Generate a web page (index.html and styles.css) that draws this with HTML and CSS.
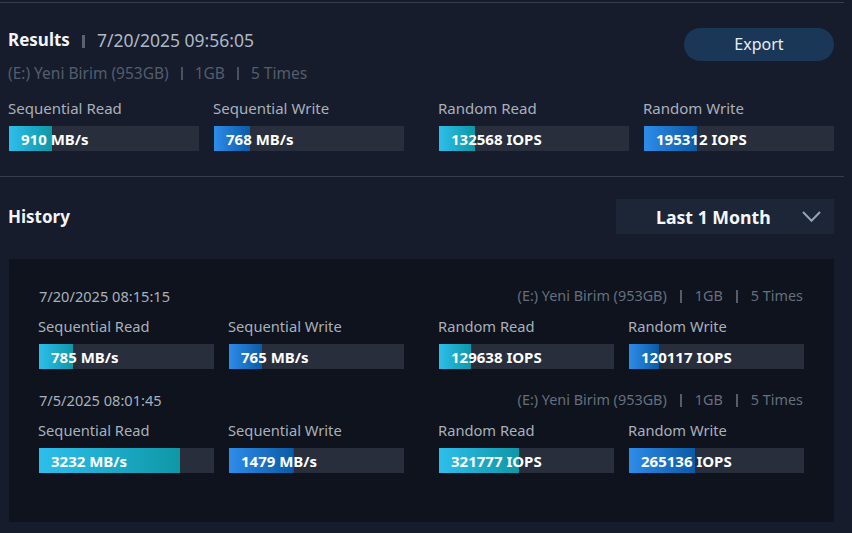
FILE: index.html
```html
<!DOCTYPE html>
<html lang="en">
<head>
<meta charset="utf-8">
<title>Results</title>
<link rel="stylesheet" href="styles.css">
</head>
<body>
<div class="page">
  <div class="rule rule-top"></div>

  <section class="results">
    <div class="results-head">
      <div class="results-info">
        <div class="title-line">
          <span class="title">Results</span>
          <span class="vsep vsep-title"></span>
          <span class="stamp">7/20/2025 09:56:05</span>
        </div>
        <div class="meta meta-results">
          <span>(E:) Yeni Birim (953GB)</span><span class="vsep"></span><span>1GB</span><span class="vsep"></span><span>5 Times</span>
        </div>
      </div>
      <button class="export">Export</button>
    </div>

    <div class="metrics">
      <div class="pair">
        <div class="metric">
          <div class="label">Sequential Read</div>
          <div class="bar bar-cyan" style="--w:22.75%">910 MB/s</div>
        </div>
        <div class="metric">
          <div class="label">Sequential Write</div>
          <div class="bar bar-blue" style="--w:19.2%">768 MB/s</div>
        </div>
      </div>
      <div class="pair">
        <div class="metric">
          <div class="label">Random Read</div>
          <div class="bar bar-cyan" style="--w:18.94%">132568 IOPS</div>
        </div>
        <div class="metric">
          <div class="label">Random Write</div>
          <div class="bar bar-blue" style="--w:27.9%">195312 IOPS</div>
        </div>
      </div>
    </div>
  </section>

  <div class="rule rule-mid"></div>

  <section class="history">
    <div class="history-head">
      <span class="title">History</span>
      <div class="dropdown">
        <span class="dropdown-text">Last 1 Month</span>
        <svg class="chevron" width="19" height="11" viewBox="0 0 19 11"><polyline points="1,1 9.5,9.8 18,1" fill="none" stroke="#93a3ba" stroke-width="2"/></svg>
      </div>
    </div>

    <div class="panel">
      <div class="entry">
        <div class="entry-head">
          <span class="entry-date">7/20/2025 08:15:15</span>
          <div class="meta meta-history">
            <span>(E:) Yeni Birim (953GB)</span><span class="vsep"></span><span>1GB</span><span class="vsep"></span><span>5 Times</span>
          </div>
        </div>
        <div class="metrics">
          <div class="pair">
            <div class="metric">
              <div class="label">Sequential Read</div>
              <div class="bar bar-cyan" style="--w:19.63%">785 MB/s</div>
            </div>
            <div class="metric">
              <div class="label">Sequential Write</div>
              <div class="bar bar-blue" style="--w:19.13%">765 MB/s</div>
            </div>
          </div>
          <div class="pair">
            <div class="metric">
              <div class="label">Random Read</div>
              <div class="bar bar-cyan" style="--w:18.52%">129638 IOPS</div>
            </div>
            <div class="metric">
              <div class="label">Random Write</div>
              <div class="bar bar-blue" style="--w:17.16%">120117 IOPS</div>
            </div>
          </div>
        </div>
      </div>

      <div class="entry">
        <div class="entry-head">
          <span class="entry-date">7/5/2025 08:01:45</span>
          <div class="meta meta-history">
            <span>(E:) Yeni Birim (953GB)</span><span class="vsep"></span><span>1GB</span><span class="vsep"></span><span>5 Times</span>
          </div>
        </div>
        <div class="metrics">
          <div class="pair">
            <div class="metric">
              <div class="label">Sequential Read</div>
              <div class="bar bar-cyan" style="--w:80.8%">3232 MB/s</div>
            </div>
            <div class="metric">
              <div class="label">Sequential Write</div>
              <div class="bar bar-blue" style="--w:36.98%">1479 MB/s</div>
            </div>
          </div>
          <div class="pair">
            <div class="metric">
              <div class="label">Random Read</div>
              <div class="bar bar-cyan" style="--w:45.97%">321777 IOPS</div>
            </div>
            <div class="metric">
              <div class="label">Random Write</div>
              <div class="bar bar-blue" style="--w:37.88%">265136 IOPS</div>
            </div>
          </div>
        </div>
      </div>
    </div>
  </section>
</div>
</body>
</html>
```

FILE: styles.css
```css
* { box-sizing: border-box; }

html, body {
  margin: 0;
  padding: 0;
  background: #161c2b;
}

body {
  font-family: "Noto Sans", "Open Sans", sans-serif;
  color: #a9b0bb;
  width: 852px;
  height: 533px;
  overflow: hidden;
}

.page {
  width: 844px;
}

.rule {
  height: 1px;
  background: #363d4b;
}

.rule-top { margin-top: 2px; }

/* ---------- Results ---------- */
.results {
  padding: 25px 10px 0 9px;
}

.results-head {
  display: flex;
  justify-content: space-between;
  align-items: flex-start;
}

.title-line {
  display: flex;
  align-items: center;
  height: 24px;
  line-height: 24px;
}

.title {
  font-size: 17px;
  font-weight: 700;
  color: #f2f4f7;
  margin-left: -1px;
}

.stamp {
  font-size: 17.5px;
  color: #aeb8c6;
}

.vsep {
  display: inline-block;
  width: 2px;
  height: 13px;
  background: #4c5464;
  margin: 0 13px;
  vertical-align: -1px;
}

.vsep-title {
  width: 3px;
  background: #5a6271;
  margin: 0 12px 0 12px;
  position: relative;
  top: 1px;
}

.meta {
  display: flex;
  align-items: center;
  white-space: nowrap;
}

.meta-results {
  margin-top: 11px;
  font-size: 15.5px;
  line-height: 20px;
  color: #545d6d;
  margin-left: -1px;
}

.meta-results .vsep { background: #4a5262; margin: 0 12px; }

.export {
  width: 150px;
  height: 33px;
  border: none;
  border-radius: 17px;
  background: #1b3757;
  color: #e8edf3;
  font-family: "Noto Sans", "Open Sans", sans-serif;
  font-size: 16px;
  padding: 0;
  line-height: 33px;
}

.metrics {
  display: flex;
  gap: 35px;
}

.pair {
  display: flex;
  gap: 15px;
}

.results .metrics { margin-top: 15px; }

.results .metric { width: 190px; }

.label {
  font-size: 15px;
  line-height: 20px;
  color: #a9b0bb;
  margin-bottom: 8px;
  margin-left: -1px;
  white-space: nowrap;
}

.bar {
  height: 25px;
  padding: 1px 0 0 12px;
  line-height: 24px;
  font-size: 15px;
  font-weight: 700;
  color: #ffffff;
  white-space: nowrap;
  background-color: #282e3c;
  background-repeat: no-repeat;
  background-size: var(--w) 100%;
}

.bar-cyan {
  background-image: linear-gradient(90deg, #2dbeec, #0e97a6);
}

.bar-blue {
  background-image: linear-gradient(90deg, #2e8ce9, #0b5aa5);
}

.rule-mid { margin-top: 25px; }

/* ---------- History ---------- */
.history {
  padding: 22px 10px 0 9px;
}

.history-head {
  display: flex;
  justify-content: space-between;
  align-items: center;
  height: 35px;
}

.dropdown {
  width: 218px;
  height: 35px;
  background: #1d2637;
  display: flex;
  align-items: center;
  justify-content: space-between;
  padding: 0 13px 0 40px;
}

.dropdown-text {
  font-size: 17.7px;
  font-weight: 700;
  color: #f4f6f9;
  line-height: 24px;
}

.chevron { display: block; }

.panel {
  margin-top: 25px;
  background: #0e131d;
  height: 263px;
  padding: 27px 30px 0 30px;
}

.entry + .entry { margin-top: 21px; }

.entry-head {
  display: flex;
  justify-content: space-between;
  align-items: center;
  height: 20px;
  margin-right: 1px;
}

.entry-date {
  font-size: 14.6px;
  line-height: 20px;
  color: #a9b0bb;
}

.meta-history {
  font-size: 14.4px;
  line-height: 20px;
  color: #666f7e;
}

.meta-history .vsep {
  background: #555d6c;
  margin: 0 13px;
}

.history .metrics { margin-top: 10px; }

.history .metric { width: 175px; }

.history .label { font-size: 14.7px; margin-bottom: 8px; }
```
